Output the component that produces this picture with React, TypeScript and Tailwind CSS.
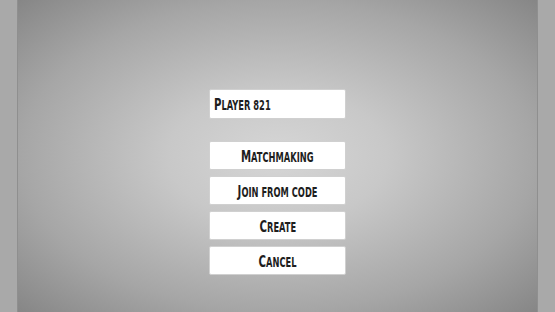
import React from "react";

const buttons = ["Matchmaking", "Join from code", "Create", "Cancel"];

function Caps({ text, left }: { text: string; left?: boolean }) {
  return (
    <span
      className={`inline-block scale-x-[0.84] scale-y-[1.2] whitespace-nowrap leading-none ${
        left ? "origin-left" : "origin-center"
      }`}
    >
      <span className="text-[13.5px]">{text[0]}</span>
      <span className="text-[11px] uppercase">{text.slice(1)}</span>
    </span>
  );
}

export default function App() {
  return (
    <div
      className="flex h-[312px] w-[555px] overflow-hidden bg-[#a8a8a8]"
      style={{ fontFamily: '"DejaVu Sans Condensed", "DejaVu Sans", sans-serif' }}
    >
      <div className="w-[18px] shrink-0 border-r border-[#8f8f8f] bg-[#a9a9a9]" />
      <div className="flex flex-1 flex-col items-center bg-[radial-gradient(ellipse_at_center,#d6d6d6_0%,#c8c8c8_30%,#a6a6a6_70%,#868686_100%)] pt-[89px]">
        <div className="flex h-[30px] w-[137px] items-center rounded-[2px] border border-[#d0d0d0] bg-white pl-[4px] font-bold text-[#1e1e1e]">
          <Caps text="Player 821" left />
        </div>
        <div className="mt-[22px] flex flex-col gap-[6px]">
          {buttons.map((b) => (
            <div
              key={b}
              className="flex h-[29px] w-[137px] items-center justify-center rounded-[2px] border border-[#d0d0d0] bg-white font-bold text-[#1e1e1e]"
            >
              <Caps text={b} />
            </div>
          ))}
        </div>
      </div>
      <div className="w-[18px] shrink-0 border-l border-[#8f8f8f] bg-[#a9a9a9]" />
    </div>
  );
}
